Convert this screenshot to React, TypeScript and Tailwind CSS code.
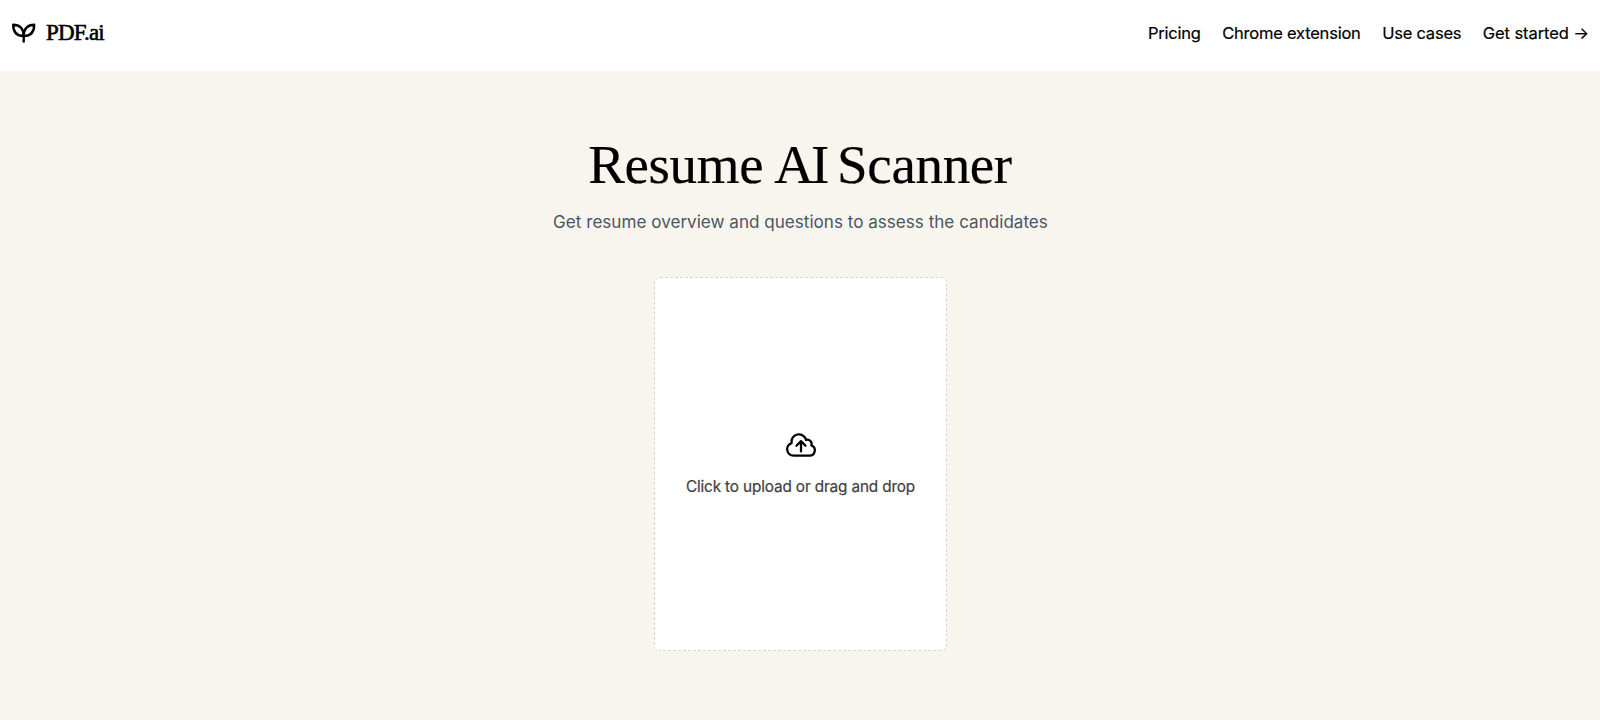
import React from 'react';

const navItems = ['Pricing', 'Chrome extension', 'Use cases'];

const Logo = () => (
  <svg className="h-6 w-6" viewBox="0 0 24 24" fill="none" stroke="currentColor" strokeWidth="2.4" strokeLinecap="round" strokeLinejoin="round">
    <path d="M11.700 14.500v6" />
    <path d="M11.700 15C4.500 15 1.200 11 1.200 3.700c6.500 0 10.500 4 10.500 11.300Z" />
    <path d="M11.700 15c7.200 0 10.500-4 10.500-11.300c-6.500 0-10.500 4-10.500 11.300Z" />
  </svg>
);

const UploadIcon = () => (
  <svg className="ml-px h-[34px] w-[34px]" viewBox="0 0 24 24" fill="none" stroke="currentColor" strokeWidth="1.600" strokeLinecap="round" strokeLinejoin="round">
    <path d="M12 16.500V9.300m0 0l3.200 3.200m-3.200-3.200l-3.200 3.200M6.750 19.500a4.500 4.500 0 01-1.410-8.775 5.250 5.250 0 0110.233-2.330 3 3 0 013.758 3.848A3.752 3.752 0 0118 19.500H6.750z" />
  </svg>
);

export default function App() {
  return (
    <div className="min-h-screen bg-[#f8f5ee] font-['Inter',sans-serif] text-black">
      <header className="flex h-[71px] items-center justify-between bg-white pr-[11px] pb-[5px] pl-3">
        <a href="#" className="flex items-center gap-2.5">
          <Logo />
          <span className="font-['Liberation_Serif',serif] text-[23px] tracking-[-0.8px] [-webkit-text-stroke:0.6px_black]">PDF.ai</span>
        </a>
        <nav className="flex items-center gap-[21.5px] text-[16.5px] tracking-[-0.22px] [-webkit-text-stroke:0.2px_black]">
          {navItems.map((item) => (
            <a key={item} href="#">{item}</a>
          ))}
          <a href="#" className="tracking-[-0.08px]">Get started →</a>
        </nav>
      </header>

      <main className="flex flex-col items-center pt-[62px]">
        <h1 className="font-['Liberation_Serif',serif] text-[55px] leading-[64px] tracking-[-0.35px] [word-spacing:-2.5px] whitespace-nowrap [-webkit-text-stroke:0.2px_black]">
          Resume <span className="tracking-[-3px]">AI</span> Scanner
        </h1>
        <p className="mt-[11px] pl-px text-[17.1px] leading-7 text-gray-600">Get resume overview and questions to assess the candidates</p>
        <button className="mt-[41px] flex h-[374px] w-[293px] flex-col items-center justify-center gap-[13px] rounded-md border border-dashed border-[#d4d4d4] bg-white pb-0.5">
          <UploadIcon />
          <span className="pl-px text-[15.3px] leading-6 tracking-[-0.13px] text-neutral-700 [-webkit-text-stroke:0.2px_#404040]">Click to upload or drag and drop</span>
        </button>
      </main>
    </div>
  );
}
